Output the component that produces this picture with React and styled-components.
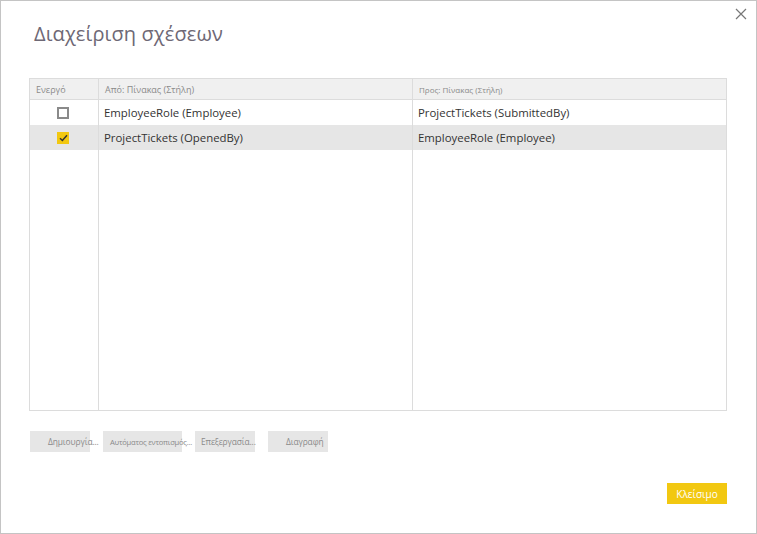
import React from "react";
import styled, { createGlobalStyle } from "styled-components";

const GlobalStyle = createGlobalStyle`
  html, body {
    margin: 0;
    padding: 0;
    background: #fff;
  }
  * {
    box-sizing: border-box;
  }
`;

const Dialog = styled.div`
  position: relative;
  width: 757px;
  height: 534px;
  border: 1px solid #c4c4c4;
  background: #fff;
  display: flex;
  flex-direction: column;
  padding: 0 29px 0 28px;
  font-family: "Open Sans", "Noto Sans", sans-serif;
`;

const CloseX = styled.button`
  position: absolute;
  top: 6px;
  right: 8px;
  width: 14px;
  height: 14px;
  padding: 0;
  border: none;
  background: transparent;
  display: flex;
  align-items: center;
  justify-content: center;
`;

const Title = styled.h1`
  margin: 19px 0 0 5px;
  font-size: 20px;
  line-height: 28px;
  font-weight: 400;
  color: #6e6875;
  letter-spacing: 0.1px;
`;

const Grid = styled.div`
  margin-top: 30px;
  height: 333px;
  border: 1px solid #dcdcdc;
  display: flex;
  flex-direction: column;
`;

const Row = styled.div`
  display: grid;
  grid-template-columns: 69px 314px 1fr;
  height: ${({ $h }) => $h}px;
  flex: ${({ $fill }) => ($fill ? 1 : "none")};
  background: ${({ $bg }) => $bg || "#fff"};
  border-bottom: ${({ $line }) => ($line ? "1px solid #dcdcdc" : "none")};
`;

const Cell = styled.div`
  display: flex;
  align-items: center;
  padding-left: ${({ $pl }) => ($pl === undefined ? 5 : $pl)}px;
  border-right: ${({ $last }) => ($last ? "none" : "1px solid #dcdcdc")};
  font-size: ${({ $size }) => $size || 11.4}px;
  color: ${({ $head }) => ($head ? "#8a8a8a" : "#333")};
  white-space: nowrap;
  overflow: hidden;
`;

const Check = styled.span`
  width: 12px;
  height: 12px;
  display: flex;
  align-items: center;
  justify-content: center;
  border: ${({ $on }) => ($on ? "none" : "2px solid #8a8a8a")};
  background: ${({ $on }) => ($on ? "#f2c811" : "#fff")};
`;

const ActionBar = styled.div`
  margin-top: 20px;
  display: flex;
  gap: 13px;
  padding-left: 1px;
`;

const Action = styled.button`
  width: ${({ $w }) => $w}px;
  flex: none;
  height: 21px;
  border: none;
  background: #e6e6e6;
  font-family: "Open Sans", "Noto Sans", sans-serif;
  font-size: ${({ $size }) => $size || 8.4}px;
  letter-spacing: ${({ $ls }) => $ls || -0.1}px;
  color: #8a8a8a;
  white-space: nowrap;
  overflow: visible;
  text-align: left;
  padding: 0 0 0 ${({ $pl }) => $pl}px;
  display: flex;
  align-items: center;
`;

const Footer = styled.div`
  margin-top: 31px;
  display: flex;
  justify-content: flex-end;
`;

const Primary = styled.button`
  width: 60px;
  height: 21px;
  border: none;
  background: #f2c811;
  color: #fff;
  font-family: "Open Sans", "Noto Sans", sans-serif;
  font-size: 10px;
  padding: 0;
`;

const rows = [
  { on: false, from: "EmployeeRole (Employee)", to: "ProjectTickets (SubmittedBy)" },
  { on: true, from: "ProjectTickets (OpenedBy)", to: "EmployeeRole (Employee)" },
];

export default function App() {
  return (
    <>
      <GlobalStyle />
      <Dialog>
        <CloseX aria-label="close">
          <svg width="12" height="12" viewBox="0 0 12 12">
            <path d="M1 1L11 11M11 1L1 11" stroke="#777" strokeWidth="1.2" fill="none" />
          </svg>
        </CloseX>
        <Title>Διαχείριση σχέσεων</Title>
        <Grid>
          <Row $h={21} $bg="#f0f0f0" $line>
            <Cell $head $size={9} $pl={6}>Ενεργό</Cell>
            <Cell $head $size={9} $pl={6}>Από: Πίνακας (Στήλη)</Cell>
            <Cell $head $size={8} $last $pl={6}>Προς: Πίνακας (Στήλη)</Cell>
          </Row>
          {rows.map((r, i) => (
            <Row key={i} $h={25} $bg={r.on ? "#e6e6e6" : "#fff"}>
              <Cell $pl={27}>
                <Check $on={r.on}>
                  {r.on && (
                    <svg width="9" height="8" viewBox="0 0 9 8">
                      <path d="M1 4.2L3.4 6.5L8 1.3" stroke="#333" strokeWidth="1.5" fill="none" />
                    </svg>
                  )}
                </Check>
              </Cell>
              <Cell>{r.from}</Cell>
              <Cell $last>{r.to}</Cell>
            </Row>
          ))}
          <Row $fill>
            <Cell />
            <Cell />
            <Cell $last />
          </Row>
        </Grid>
        <ActionBar>
          <Action $w={60} $pl={18}>Δημιουργία...</Action>
          <Action $w={79} $pl={7} $size={7.6} $ls={-0.25}>Αυτόματος εντοπισμός...</Action>
          <Action $w={60} $pl={6}>Επεξεργασία...</Action>
          <Action $w={60} $pl={18}>Διαγραφή</Action>
        </ActionBar>
        <Footer>
          <Primary>Κλείσιμο</Primary>
        </Footer>
      </Dialog>
    </>
  );
}
